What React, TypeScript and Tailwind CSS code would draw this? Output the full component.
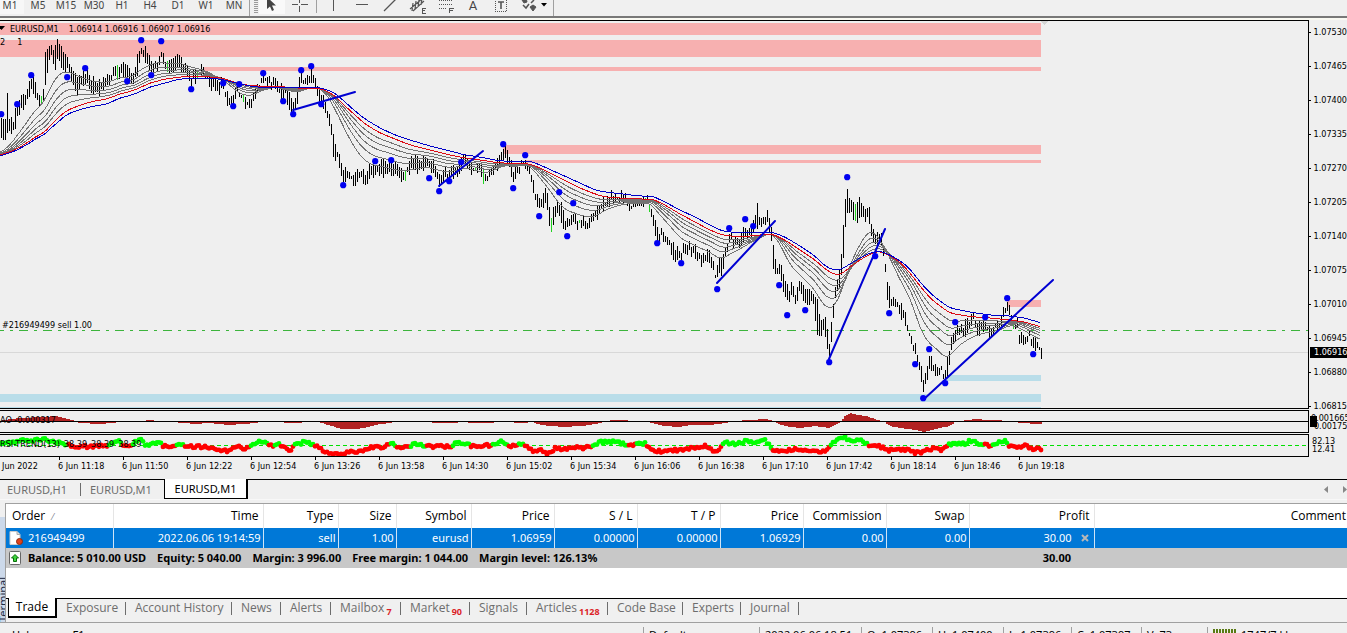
import type { ReactNode } from "react";

type Point = [number, number];
type Range = [number, number, number];

const RANGES: Range[] = [
  [1, 117, 136], [3, 121, 139], [5, 119, 136], [7, 92, 132], [9, 117, 130], [13, 121, 132], [16, 107, 122], [19, 102, 115],
  [22, 89, 108], [25, 94, 107], [28, 82, 97], [31, 77, 86], [35, 79, 97], [38, 95, 104], [41, 99, 107], [43, 88, 104],
  [45, 52, 88], [48, 51, 62], [51, 45, 58], [54, 51, 68], [57, 42, 63], [60, 46, 64], [63, 53, 67], [65, 57, 69], [68, 56, 72],
  [71, 68, 82], [74, 73, 85], [77, 79, 95], [80, 77, 87], [84, 68, 84], [87, 74, 84], [90, 77, 92], [94, 79, 92], [100, 81, 94],
  [105, 77, 86], [110, 76, 86], [114, 65, 75], [117, 66, 80], [121, 61, 74], [127, 65, 78], [131, 71, 84], [134, 72, 80],
  [137, 56, 72], [141, 44, 52], [145, 49, 62], [149, 59, 69], [153, 61, 71], [157, 59, 70], [161, 48, 60], [164, 57, 71],
  [168, 63, 73], [172, 61, 71], [178, 54, 67], [182, 61, 70], [187, 65, 78], [191, 75, 84], [196, 70, 79], [201, 68, 76],
  [205, 68, 78], [210, 76, 88], [214, 79, 91], [218, 84, 96], [222, 79, 89], [226, 92, 103], [230, 98, 105], [234, 93, 104],
  [237, 82, 91], [240, 93, 98], [243, 97, 103], [247, 101, 107], [251, 98, 108], [255, 86, 95], [258, 82, 92], [263, 77, 83],
  [267, 74, 84], [272, 79, 88], [276, 81, 90], [281, 85, 98], [285, 89, 97], [289, 94, 109], [292, 105, 112], [295, 95, 111],
  [299, 75, 92], [301, 74, 86], [304, 79, 88], [308, 75, 82], [312, 70, 82], [315, 80, 88], [319, 87, 99], [322, 96, 107],
  [326, 108, 117], [330, 118, 126], [333, 135, 154], [337, 150, 160], [340, 158, 169], [343, 171, 182], [346, 166, 179],
  [350, 172, 180], [354, 174, 185], [360, 169, 180], [366, 177, 185], [370, 163, 175], [378, 164, 176], [386, 161, 174],
  [395, 160, 174], [403, 174, 183], [409, 163, 172], [415, 154, 169], [418, 161, 175], [424, 159, 168], [430, 159, 171],
  [435, 166, 179], [440, 173, 184], [444, 169, 180], [448, 172, 180], [455, 166, 175], [460, 160, 171], [464, 155, 165],
  [470, 162, 171], [475, 166, 172], [480, 163, 170], [484, 171, 185], [488, 173, 181], [493, 166, 175], [498, 159, 168],
  [501, 149, 164], [505, 149, 161], [510, 158, 169], [513, 169, 186], [518, 164, 174], [523, 158, 164], [527, 162, 171],
  [532, 175, 185], [535, 193, 201], [539, 196, 212], [543, 194, 207], [545, 187, 204], [549, 206, 224], [551, 220, 229],
  [555, 202, 214], [558, 200, 211], [562, 206, 223], [566, 222, 230], [570, 214, 222], [574, 213, 224], [578, 219, 228],
  [582, 217, 225], [587, 219, 227], [592, 216, 224], [596, 210, 219], [599, 201, 212], [605, 200, 208], [611, 193, 202],
  [617, 194, 204], [623, 192, 202], [628, 200, 208], [632, 203, 210], [638, 200, 206], [643, 198, 204], [646, 194, 199],
  [650, 204, 212], [653, 215, 227], [657, 230, 241], [661, 231, 237], [666, 236, 243], [670, 239, 249], [674, 245, 262],
  [677, 249, 259], [681, 251, 261], [684, 244, 255], [690, 243, 253], [695, 244, 256], [700, 253, 264], [704, 253, 266],
  [708, 246, 259], [712, 256, 270], [715, 272, 282], [718, 262, 279], [723, 251, 268], [727, 241, 251], [731, 232, 240],
  [735, 239, 248], [740, 237, 247], [745, 225, 239], [750, 229, 239], [755, 216, 231], [757, 203, 226], [759, 217, 227],
  [762, 215, 224], [767, 213, 221], [770, 218, 233], [773, 242, 266], [776, 266, 275], [781, 265, 279], [784, 280, 294],
  [788, 290, 305], [791, 284, 297], [795, 292, 303], [800, 281, 290], [804, 290, 303], [808, 291, 302], [813, 293, 303],
  [817, 297, 337], [820, 325, 339], [824, 317, 329], [828, 332, 354], [829, 342, 359], [832, 312, 330], [834, 292, 306],
  [838, 274, 289], [842, 247, 273], [844, 207, 248], [846, 189, 209], [850, 199, 213], [853, 206, 222], [856, 208, 221],
  [858, 196, 219], [861, 200, 220], [865, 211, 221], [868, 203, 218], [871, 223, 234], [875, 231, 247], [879, 231, 240],
  [883, 242, 255], [885, 266, 275], [887, 282, 297], [890, 294, 308], [893, 296, 307], [898, 301, 311], [903, 308, 319],
  [908, 326, 334], [913, 343, 354], [917, 351, 361], [920, 361, 374], [923, 380, 395], [926, 374, 384], [928, 357, 369],
  [932, 361, 370], [936, 364, 374], [940, 366, 372], [944, 373, 379], [947, 357, 374], [950, 342, 357], [953, 331, 344],
  [957, 327, 337], [962, 326, 337], [967, 321, 336], [972, 316, 325], [974, 308, 319], [976, 325, 337], [980, 323, 332],
  [985, 319, 328], [990, 331, 339], [995, 323, 332], [1000, 319, 328], [1004, 306, 315], [1007, 301, 310], [1010, 311, 321],
  [1013, 322, 331], [1017, 321, 330], [1019, 335, 344], [1024, 336, 346], [1029, 331, 340], [1033, 341, 349], [1037, 340, 347],
  [1041, 352, 357],
];

const FAST: Point[] = [
  [0, 153], [10, 145], [25, 125], [35, 110], [43, 104], [50, 88], [57, 76], [65, 71], [72, 73], [80, 77], [95, 82], [110, 82],
  [120, 77], [132, 77], [140, 70], [150, 65], [160, 62], [170, 64], [180, 63], [190, 67], [200, 69], [208, 72], [215, 76],
  [222, 80], [230, 85], [237, 92], [247, 96], [253, 95], [260, 91], [275, 87], [290, 91], [300, 92], [308, 88], [318, 88],
  [325, 92], [330, 100], [338, 115], [345, 130], [353, 145], [362, 158], [372, 165], [385, 167], [395, 170], [405, 171],
  [415, 169], [425, 167], [435, 169], [445, 172], [455, 171], [465, 168], [475, 170], [485, 173], [495, 170], [505, 165],
  [515, 167], [525, 164], [532, 168], [540, 178], [548, 188], [553, 195], [560, 205], [568, 211], [575, 213], [582, 216],
  [590, 217], [598, 215], [605, 210], [620, 205], [635, 203], [650, 203], [660, 215], [670, 226], [680, 238], [690, 243],
  [700, 248], [710, 252], [716, 257], [722, 259], [730, 254], [740, 249], [750, 243], [760, 238], [768, 233], [775, 236],
  [783, 250], [790, 265], [800, 275], [808, 283], [815, 290], [820, 300], [828, 309], [835, 306], [842, 290], [850, 265],
  [858, 248], [866, 234], [872, 231], [880, 239], [890, 258], [900, 280], [907, 292], [913, 306], [918, 322], [923, 335],
  [930, 344], [938, 350], [945, 358], [950, 356], [957, 347], [970, 338], [980, 334], [990, 332], [1000, 330], [1010, 325],
  [1020, 328], [1030, 334], [1041, 340],
];

const RED: Point[] = [
  [0, 155], [15, 150], [30, 141], [38, 135], [43, 134], [50, 126], [58, 118], [66, 111], [75, 107], [90, 102], [107, 99],
  [120, 94], [135, 90], [150, 83], [165, 79], [180, 77], [195, 76], [210, 77], [222, 78], [240, 84], [255, 86], [275, 86],
  [295, 88], [315, 88], [325, 90], [335, 96], [345, 106], [355, 115], [365, 124], [380, 133], [395, 139], [410, 145],
  [430, 150], [450, 155], [465, 158], [480, 160], [500, 163], [515, 163], [530, 164], [540, 168], [560, 178], [580, 188],
  [595, 194], [605, 197], [620, 198], [640, 199], [652, 199], [665, 205], [680, 214], [695, 222], [710, 230], [722, 235],
  [740, 237], [760, 235], [772, 234], [785, 240], [800, 250], [815, 260], [825, 269], [835, 275], [842, 274], [850, 267],
  [860, 260], [870, 254], [880, 251], [890, 256], [900, 262], [910, 273], [920, 286], [930, 298], [940, 306], [950, 313],
  [960, 315], [975, 317], [990, 318], [1010, 320], [1025, 322], [1041, 327],
];

const BLUE: Point[] = [
  [0, 156], [15, 151], [30, 143], [38, 137], [43, 136], [50, 129], [66, 115], [75, 111], [90, 107], [107, 104], [120, 98],
  [135, 94], [150, 87], [165, 83], [180, 79], [200, 78], [220, 79], [240, 84], [255, 87], [275, 87], [295, 88], [315, 87],
  [325, 89], [335, 93], [345, 102], [355, 111], [365, 119], [380, 128], [395, 135], [410, 140], [430, 146], [450, 151],
  [465, 155], [480, 157], [500, 161], [530, 161], [540, 165], [560, 174], [580, 183], [595, 190], [605, 192], [640, 196],
  [652, 196], [665, 202], [680, 210], [695, 217], [710, 225], [722, 231], [740, 233], [772, 232], [785, 237], [800, 246],
  [815, 256], [825, 266], [833, 270], [840, 270], [850, 264], [860, 258], [870, 253], [880, 251], [890, 255], [902, 262],
  [910, 269], [920, 282], [930, 293], [940, 301], [950, 308], [960, 310], [975, 313], [990, 315], [1010, 316], [1025, 318],
  [1041, 323],
];

const FRACTALS: Point[] = [
  [1, 114], [17, 104], [31, 75], [67, 77], [85, 68], [127, 81], [141, 40], [151, 75], [161, 41], [191, 89], [223, 83],
  [233, 106], [239, 84], [263, 73], [283, 101], [293, 114], [301, 70], [311, 66], [321, 104], [343, 185], [375, 161],
  [391, 160], [429, 178], [439, 191], [449, 181], [461, 162], [503, 144], [513, 188], [525, 155], [539, 216], [559, 192],
  [567, 236], [573, 203], [657, 243], [681, 263], [717, 289], [729, 228], [745, 219], [753, 226], [779, 285], [787, 315],
  [805, 310], [829, 362], [847, 177], [875, 256], [889, 313], [915, 364], [923, 398], [929, 349], [945, 383], [955, 322],
  [985, 317], [1007, 298], [1033, 354],
];

const TRENDS = [
  [293, 110, 355, 92], [439, 186, 483, 151], [717, 283, 775, 221], [829, 359, 885, 229], [923, 400, 1053, 280],
];

const ZONES: [number, number, number, number, string][] = [
  [0, 23, 1041, 12, "#f7b0b0"], [0, 40, 1041, 17, "#f7b0b0"], [204, 67, 837, 4, "#f7b0b0"], [503, 145, 538, 9, "#f7b0b0"],
  [525, 160, 516, 3, "#f7b0b0"], [1007, 300, 34, 7, "#f7b0b0"], [0, 394, 1041, 8, "#b9dde9"], [947, 375, 94, 6, "#b9dde9"],
  [0, 407, 1041, 1, "#b9dde9"],
];

const GREEN_BARS = new Set([41, 117, 167, 197, 243, 405, 475, 483, 551, 579, 645, 649, 855, 1013]);

const AO: Point[] = [
  [0, 420], [10, 418], [20, 417], [45, 416], [55, 415], [65, 417], [76, 420], [78, 421], [80, 422], [100, 423], [112, 422],
  [118, 421], [120, 420], [130, 420], [132, 421], [138, 421], [140, 420], [150, 419], [160, 420], [168, 420], [170, 421],
  [187, 422], [195, 423], [210, 422], [228, 424], [245, 423], [262, 421], [266, 420], [278, 420], [280, 421], [290, 422],
  [300, 422], [304, 420], [315, 420], [318, 421], [325, 423], [335, 426], [343, 428], [355, 428], [365, 427], [375, 424],
  [390, 422], [395, 421], [414, 421], [416, 420], [424, 420], [426, 421], [438, 422], [455, 422], [460, 421], [478, 422],
  [493, 422], [500, 420], [510, 420], [515, 422], [522, 422], [532, 421], [538, 423], [550, 425], [565, 426], [580, 425],
  [590, 424], [600, 422], [605, 420], [615, 419], [640, 420], [643, 421], [645, 420], [648, 421], [655, 423], [665, 425],
  [678, 426], [690, 424], [710, 424], [725, 422], [735, 420], [750, 419], [766, 418], [773, 420], [776, 422], [785, 425],
  [800, 427], [815, 425], [830, 427], [837, 423], [841, 420], [845, 415], [850, 412], [858, 414], [866, 415], [875, 418],
  [885, 421], [890, 425], [900, 427], [915, 429], [925, 431], [935, 428], [950, 425], [955, 421], [960, 420], [975, 418],
  [990, 419], [1015, 420], [1020, 422], [1041, 423],
];

const RSI: Point[] = [
  [0, 443], [10, 442], [20, 440], [30, 441], [45, 438], [50, 441], [60, 441], [68, 445], [75, 446], [95, 446], [107, 445],
  [110, 444], [118, 440], [122, 445], [132, 446], [135, 441], [140, 439], [145, 444], [160, 443], [163, 446], [175, 445],
  [180, 443], [185, 446], [200, 446], [215, 448], [228, 451], [235, 446], [245, 448], [250, 446], [255, 443], [262, 441],
  [268, 444], [272, 446], [276, 443], [283, 446], [290, 450], [294, 445], [298, 444], [305, 441], [310, 443], [315, 445],
  [322, 449], [330, 453], [340, 454], [350, 452], [360, 451], [364, 449], [370, 447], [385, 446], [392, 443], [396, 447],
  [408, 446], [415, 443], [425, 445], [435, 446], [450, 446], [455, 443], [468, 443], [471, 446], [490, 445], [494, 444],
  [500, 441], [507, 443], [509, 446], [517, 445], [521, 444], [527, 446], [533, 451], [540, 450], [548, 453], [555, 448],
  [565, 449], [575, 447], [585, 448], [592, 445], [600, 442], [612, 441], [626, 444], [630, 446], [636, 444], [645, 443],
  [650, 449], [660, 451], [675, 450], [690, 448], [700, 448], [705, 446], [715, 452], [721, 447], [725, 442], [735, 444],
  [745, 441], [755, 442], [765, 440], [770, 445], [772, 451], [785, 450], [795, 449], [805, 449], [815, 451], [820, 451],
  [828, 449], [832, 443], [840, 438], [845, 436], [848, 440], [858, 439], [866, 443], [872, 446], [880, 446], [890, 450],
  [905, 449], [915, 452], [920, 453], [925, 449], [935, 448], [942, 450], [948, 445], [955, 443], [965, 443], [970, 440],
  [978, 443], [986, 445], [992, 445], [1000, 442], [1004, 440], [1009, 445], [1020, 446], [1025, 445], [1030, 448], [1041, 448],
];

const GREEN_RUNS: Point[] = [
  [0, 68], [109, 121], [133, 161], [176, 184], [250, 268], [274, 279], [295, 313], [391, 395], [410, 425], [453, 469],
  [492, 507], [518, 524], [592, 627], [636, 646], [722, 771], [830, 868], [948, 984], [992, 1008],
];

const BAR_XS = Array.from({ length: 521 }, (_, i) => 1 + i * 2);

function noise(n: number) {
  const v = Math.sin(n * 127.1) * 43758.5453;
  return v - Math.floor(v);
}

function at(points: Point[], x: number) {
  if (x <= points[0][0]) return points[0][1];
  for (let i = 1; i < points.length; i++) {
    const [x1, y1] = points[i];
    if (x <= x1) {
      const [x0, y0] = points[i - 1];
      return y0 + ((y1 - y0) * (x - x0)) / (x1 - x0);
    }
  }
  return points[points.length - 1][1];
}

function smooth(points: Point[], x: number) {
  return (at(points, x - 4) + at(points, x - 2) + at(points, x) + at(points, x + 2) + at(points, x + 4)) / 5;
}

function averagePath(fn: (x: number) => number) {
  const out: string[] = [];
  for (let x = 0; x <= 1041; x += 2) out.push(`${x} ${fn(x).toFixed(1)}`);
  return "M" + out.join("L");
}

const HIGHS: Point[] = RANGES.map(([x, h]) => [x, h]);
const LOWS: Point[] = RANGES.map(([x, , l]) => [x, l]);

function barPath(green: boolean) {
  return BAR_XS.filter((x) => GREEN_BARS.has(x) === green)
    .map((x) => {
      const hi = Math.round(at(HIGHS, x) - noise(x) * 8 + 4);
      const lo = Math.round(at(LOWS, x) + noise(x + 0.5) * 8 - 4);
      return `M${x + 0.5} ${hi}V${Math.max(lo, hi + 3)}`;
    })
    .join("");
}

const aoPath =
  "M0 421.5" + BAR_XS.map((x) => `L${x - 1} ${Math.round(at(AO, x)) + 0.5}h2`).join("") + "L1042 421.5Z";

const isUp = (x: number) => GREEN_RUNS.some(([a, b]) => x >= a && x <= b);

function PricePlot() {
  return (
    <svg className="block h-full w-full" shapeRendering="crispEdges" fill="none" aria-label="EURUSD price chart">
      <g transform="translate(0,-21)">
        {ZONES.map(([x, y, w, h, c], i) => (
          <rect key={i} x={x} y={y} width={w} height={h} fill={c} />
        ))}
        <path d="M1040 21h8l-4 4z" fill="#d4d4d4" />
        <line x1="0" x2="100%" y1="352.5" y2="352.5" stroke="#d8d8d8" />
        <line x1="-5" x2="100%" y1="330.5" y2="330.5" stroke="#3cb43c" strokeDasharray="9 6 3 6" />
        <path d={barPath(false)} stroke="#000" />
        <path d={barPath(true)} stroke="#22d322" />
        {[0, 0.26, 0.47, 0.65, 0.82].map((w) => (
          <path
            key={w}
            d={averagePath((x) => smooth(FAST, x - w * 5) * (1 - w) + smooth(RED, x) * w)}
            stroke="#737373"
          />
        ))}
        <path d={averagePath((x) => smooth(RED, x))} stroke="#dc0a14" />
        <path d={averagePath((x) => smooth(BLUE, x))} stroke="#0000c8" />
        <g shapeRendering="auto">
          {TRENDS.map(([x1, y1, x2, y2]) => (
            <line key={x1} x1={x1} y1={y1} x2={x2} y2={y2} stroke="#0000d2" strokeWidth="2" strokeLinecap="round" />
          ))}
          {FRACTALS.map(([x, y]) => (
            <circle key={x} cx={x + 0.2} cy={y + 0.2} r="3.1" fill="#0000f0" />
          ))}
        </g>
      </g>
    </svg>
  );
}

function AoPlot() {
  return (
    <svg className="block h-full w-full" shapeRendering="crispEdges" aria-label="Awesome oscillator">
      <g transform="translate(0,-411)">
        <path d={aoPath} fill="#b22222" />
        <line x1="0" x2="100%" y1="421.5" y2="421.5" stroke="#000" />
      </g>
    </svg>
  );
}

function RsiPlot() {
  return (
    <svg className="block h-full w-full" aria-label="RSI trend">
      <g transform="translate(0,-435)">
        <line x1="0" x2="100%" y1="445.5" y2="445.5" stroke="#00e000" strokeDasharray="4 3" />
        {BAR_XS.map((x) => (
          <circle key={x} cx={x} cy={at(RSI, x) + noise(x) * 3 - 1} r="2.4" fill={isUp(x) ? "#00ff00" : "#ff0000"} />
        ))}
      </g>
    </svg>
  );
}

const CHART_FONT = "font-['DejaVu_Sans_Condensed','Noto_Sans',sans-serif] text-[9px] leading-[12px]";

function ToolButton({ label, children, wide }: { label: string; children: ReactNode; wide?: boolean }) {
  return (
    <button type="button" aria-label={label} className={wide ? "h-4 w-9 shrink-0" : "h-4 w-7 shrink-0"}>
      <svg className="h-4 w-full" fill="none" stroke="#555" shapeRendering="auto">
        {children}
      </svg>
    </button>
  );
}

function Toolbar() {
  const frames = ["M5", "M15", "M30", "H1", "H4", "D1", "W1", "MN"];
  return (
    <div className="flex h-4 shrink-0 items-start overflow-hidden bg-[#f0f0f0] text-[10px] leading-[10px] text-[#444]">
      <button type="button" className="h-[14px] w-6 bg-[#f7f7f7] pb-1 pr-1">M1</button>
      {frames.map((f) => (
        <button key={f} type="button" className="w-7 text-center">{f}</button>
      ))}
      <div className="ml-px h-4 w-px bg-[#a0a0a0]" />
      <svg className="ml-1 h-[14px] w-1" stroke="#9a9a9a" strokeWidth="4" strokeDasharray="1 1">
        <line x1="2" x2="2" y1="0" y2="13" />
      </svg>
      <button type="button" aria-label="Cursor" className="ml-px h-[14px] w-[26px] bg-[#f9f9f9]">
        <svg className="h-[14px] w-[26px]" fill="#444">
          <path d="M8 -3v12l3-2.500 2 4.500 2-1-2-4.500h4z" />
        </svg>
      </button>
      <ToolButton label="Crosshair">
        <path d="M14.500 0v3M14.500 6v6M7 4.500h6M16 4.500h7" shapeRendering="crispEdges" />
      </ToolButton>
      <div className="ml-[3px] h-[13px] w-px bg-[#a0a0a0]" />
      <ToolButton label="Vertical line"><path d="M16.500 0v11" shapeRendering="crispEdges" /></ToolButton>
      <ToolButton label="Horizontal line"><path d="M11 4.500h12" shapeRendering="crispEdges" /></ToolButton>
      <ToolButton label="Trendline"><path d="M11 11L23 -1" strokeWidth="1.300" /></ToolButton>
      <ToolButton label="Equidistant channel">
        <path d="M9 9L22 -2M12 11L23 1M12 3l-1 8M15 1l-1 8M18 0l-1 7M21 -2l-1 7" strokeWidth="1.200" />
        <path d="M24.500 8h-3.500v5h3.500M21 10.500h3" shapeRendering="crispEdges" />
      </ToolButton>
      <ToolButton label="Fibonacci retracement">
        <path d="M10 0.500h14M10 4.500h14M10 8.500h8" strokeDasharray="1 1" shapeRendering="crispEdges" />
        <path d="M24.500 8h-4v5M20.500 10.500h3" shapeRendering="crispEdges" />
      </ToolButton>
      <button type="button" className="w-7 pl-1 text-center font-['Roboto'] text-[13px] leading-[11px]">A</button>
      <ToolButton label="Text label">
        <path d="M10.500 -1v12.500h11V-1" strokeDasharray="1 1" shapeRendering="crispEdges" />
        <path d="M13 2h6M16 2v7" strokeWidth="1.600" />
      </ToolButton>
      <ToolButton label="Arrows" wide>
        <path d="M9 0l4 -2 1 4-3 1zM17 7l3-2 3 2-3 4z" fill="#555" />
        <path d="M10 5l3 3 3-4M18 3l3-3" strokeWidth="1.500" />
        <path d="M28 3h6l-3 3.500z" fill="#000" stroke="none" />
      </ToolButton>
      <div className="ml-1 h-4 w-px bg-[#a0a0a0]" />
    </div>
  );
}

const PRICES = [
  "1.07530", "1.07465", "1.07400", "1.07335", "1.07270", "1.07205", "1.07140", "1.07075", "1.07010", "1.06945", "1.06880", "1.06815",
];
const TIMES = [
  "11:18", "11:50", "12:22", "12:54", "13:26", "13:58", "14:30", "15:02", "15:34", "16:06", "16:38", "17:10", "17:42", "18:14", "18:46", "19:18",
];

function Chart() {
  return (
    <section className={`bg-[#efefef] text-black ${CHART_FONT}`}>
      <div className="flex">
        <div className="flex min-w-0 flex-1 flex-col gap-px">
          <div className="relative h-[389px] border-y border-r border-black">
            <PricePlot />
            <svg className="absolute left-0 top-[5px] h-1 w-[5px]"><path d="M-2 0h7l-3.500 4z" /></svg>
            <div className="absolute left-[10px] top-[2px] flex gap-[10px] whitespace-pre">
              <span>EURUSD,M1</span>
              <span>1.06914 1.06916 1.06907 1.06916</span>
            </div>
            <div className="absolute left-0 top-[15px] flex gap-3"><span>2</span><span>1</span></div>
            <div className="absolute left-[2px] top-[298px]">#216949499 sell 1.00</div>
          </div>
          <div className="relative h-[23px] border-y border-r border-black">
            <AoPlot />
            <div className="absolute left-0 top-[3px]">AO -0.000317</div>
          </div>
          <div className="relative h-[23px] border-y border-r border-black">
            <RsiPlot />
            <div className="absolute left-0 top-[3px] flex gap-1 whitespace-nowrap">
              <span>RSI-TREND(13)</span>
              <span>38.39</span>
              <span>38.39</span>
              <span>38.39</span>
            </div>
          </div>
        </div>
        <div className="relative w-[38px] shrink-0 overflow-hidden pt-[6px]">
          <div className="flex h-[386px] flex-col justify-between">
            {PRICES.map((p) => (
              <div key={p} className="flex items-center gap-[3px]">
                <span className="h-px w-[2px] bg-black" />
                {p}
              </div>
            ))}
          </div>
          <div className="absolute left-px top-[327px] h-[11px] w-full bg-black pl-1 leading-[11px] text-white">1.06916</div>
          <div className="absolute left-px top-[396px] h-[11px] w-[7px] bg-black" />
          <div className="absolute left-[2px] top-[392px]">0.001665</div>
          <div className="absolute left-[2px] top-[400px]">-0.00175</div>
          <div className="absolute left-[3px] top-[415px]">82.13</div>
          <div className="absolute left-[3px] top-[423px]">12.41</div>
        </div>
      </div>
      <div className="flex h-[22px] overflow-hidden whitespace-nowrap">
        <div className="w-[58px] shrink-0 pl-[2px] pt-[3px]">Jun 2022</div>
        {TIMES.map((t) => (
          <div key={t} className="w-16 shrink-0">
            <div className="ml-px h-[3px] w-px bg-black" />
            6 Jun {t}
          </div>
        ))}
      </div>
    </section>
  );
}

function ChartTabs() {
  return (
    <nav className="flex h-5 shrink-0 bg-[#f0f0f0] text-[11px] leading-[18px] text-[#6d6d6d]">
      <div className="flex w-[164px] border-t border-black">
        <button type="button" className="my-[3px] w-[81px] border-r border-[#6d6d6d] pl-[7px] text-left leading-[12px]">EURUSD,H1</button>
        <button type="button" className="my-[3px] pl-[9px] leading-[12px]">EURUSD,M1</button>
      </div>
      <button type="button" className="w-[84px] border-x border-b border-r-2 border-black bg-white text-black">EURUSD,M1</button>
      <div className="flex flex-1 items-center justify-end gap-[14px] border-t border-black">
        <svg className="h-[7px] w-1" fill="#888"><path d="M4 0v7L0 3.500z" /></svg>
        <svg className="h-[7px] w-[5px]" fill="#888"><path d="M1 0v7l4-3.500z" /></svg>
      </div>
    </nav>
  );
}

const COLUMNS = ["Order", "Time", "Type", "Size", "Symbol", "Price", "S / L", "T / P", "Price", "Commission", "Swap", "Profit", "Comment"];
const ROW = ["2022.06.06 19:14:59", "sell", "1.00", "eurusd", "1.06959", "0.00000", "0.00000", "1.06929", "0.00", "0.00"];

function Orders() {
  return (
    <table className="w-full table-fixed border-collapse text-[11px] leading-[18px]">
      <colgroup>
        <col className="w-[107px]" />
        <col className="w-[150px]" />
        <col className="w-[75px]" />
        <col className="w-[58px]" />
        <col className="w-[75px]" />
        <col className="w-[83px]" />
        <col className="w-[83px]" />
        <col className="w-[83px]" />
        <col className="w-[83px]" />
        <col className="w-[83px]" />
        <col className="w-[83px]" />
        <col className="w-[125px]" />
        <col />
      </colgroup>
      <thead className="font-['Open_Sans','Noto_Sans',sans-serif] text-[12px]">
        <tr className="h-6">
          {COLUMNS.map((c, i) =>
            i === 0 ? (
              <th key={i} scope="col" className="border-r border-[#e5e5e5] p-0 pl-[6px] text-left font-normal">
                {c} <span className="pl-1 text-[9px] text-gray-500">⁄</span>
              </th>
            ) : (
              <th
                key={i}
                scope="col"
                className={i === 12 ? "p-0 pr-px text-right font-normal" : "border-r border-[#e5e5e5] p-0 pr-1 text-right font-normal"}
              >
                {c}
              </th>
            ),
          )}
        </tr>
      </thead>
      <tbody>
        <tr className="h-5 bg-[#0078d7] text-white">
          <td className="border-r border-[#cfe4f7] p-0">
            <div className="flex items-center gap-[5px] pl-[3px]">
              <svg className="h-[14px] w-[14px]">
                <path d="M1 .5h7l3 3v10H1z" fill="#fff" stroke="#ccc" />
                <path d="M8 .5v3h3" fill="#ddd" stroke="#aaa" />
                <circle cx="10.500" cy="10.500" r="3" fill="#e0421c" stroke="#8c2a10" />
              </svg>
              <span>216949499</span>
            </div>
          </td>
          {ROW.map((v, i) => (
            <td key={i} className="border-r border-[#cfe4f7] p-0 pr-[2px] text-right">{v}</td>
          ))}
          <td className="border-r border-[#cfe4f7] p-0">
            <div className="flex items-center justify-end gap-[9px] pr-[5px]">
              30.00
              <button type="button" aria-label="Close order">
                <svg className="block h-2 w-2" stroke="#b8b8b8" strokeWidth="2"><path d="M1 1l6 6M7 1L1 7" /></svg>
              </button>
            </div>
          </td>
          <td className="p-0" />
        </tr>
        <tr className="h-5 bg-[#c8c8c8] font-bold">
          <td colSpan={11} className="p-0">
            <div className="flex items-center whitespace-nowrap pl-[3px]">
              <svg className="mr-[6px] h-[14px] w-[13px]">
                <rect x=".5" y=".5" width="11" height="13" rx="1" fill="#fff" stroke="#666" />
                <path d="M6 3.500l3.500 3.500h-2v3.500h-3V7h-2z" fill="#3fd43f" stroke="#087008" />
              </svg>
              <div className="flex gap-[11px]">
                <span>Balance: 5 010.00 USD</span>
                <span>Equity: 5 040.00</span>
                <span>Margin: 3 996.00</span>
                <span>Free margin: 1 044.00</span>
                <span>Margin level: 126.13%</span>
              </div>
            </div>
          </td>
          <td className="p-0 pr-[23px] text-right">30.00</td>
          <td className="p-0" />
        </tr>
      </tbody>
    </table>
  );
}

const TERMINAL_TABS: { name: string; width: string; count?: string }[] = [
  { name: "Exposure", width: "w-[69px]" },
  { name: "Account History", width: "w-[106px]" },
  { name: "News", width: "w-[49px]" },
  { name: "Alerts", width: "w-[50px]" },
  { name: "Mailbox", width: "w-[70px]", count: "7" },
  { name: "Market", width: "w-[69px]", count: "90" },
  { name: "Signals", width: "w-[57px]" },
  { name: "Articles", width: "w-[81px]", count: "1128" },
  { name: "Code Base", width: "w-[75px]" },
  { name: "Experts", width: "w-[58px]" },
  { name: "Journal", width: "w-[58px]" },
];

function Terminal() {
  return (
    <section className="flex shrink-0 border-t border-[#f8f8f8] bg-[#f0f0f0] pt-[3px]">
      <div className="mt-[14px] flex w-[5px] shrink-0 justify-center overflow-hidden bg-[#ccd9ea] pt-14 text-[11px] leading-[12px] text-[#1c2b45]">
        <span className="rotate-180 [writing-mode:vertical-rl]">Terminal</span>
      </div>
      <div className="min-w-0 flex-1 border-l border-t border-[#a0a0a0]">
        <div className="h-[94px] bg-white">
          <Orders />
        </div>
        <nav className="flex h-[24px] items-start font-['Open_Sans','Noto_Sans',sans-serif] text-[12px] leading-[12px] text-[#6d6d6d]">
          <div className="h-px w-[2px] bg-black" />
          <button type="button" className="h-5 w-[49px] border-b-2 border-l border-r-2 border-black bg-white text-black">Trade</button>
          <div className="flex flex-1 border-t border-black pt-[3px]">
            {TERMINAL_TABS.map((t) => (
              <button
                key={t.name}
                type="button"
                className={`${t.width} flex h-[13px] shrink-0 gap-[2px] whitespace-nowrap border-r border-[#6d6d6d] pl-[9px] text-left`}
              >
                {t.name}
                {t.count && <span className="pt-1 text-[9px] font-bold text-[#dc1e28]">{t.count}</span>}
              </button>
            ))}
          </div>
        </nav>
      </div>
    </section>
  );
}

const STATUS = [
  { text: "Default", width: "w-[116px]" },
  { text: "2022.06.06 18:51", width: "w-[102px]" },
  { text: "O: 1.07396", width: "w-[71px]" },
  { text: "H: 1.07400", width: "w-[71px]" },
  { text: "L: 1.07396", width: "w-[68px]" },
  { text: "C: 1.07397", width: "w-[70px]" },
  { text: "V: 73", width: "w-[66px]" },
];

function StatusBar() {
  return (
    <footer className="flex h-6 shrink-0 border-t border-[#a0a0a0] bg-[#f0f0f0] pt-1 text-[11px] leading-[16px] text-black">
      <div className="w-[643px] shrink-0 pl-3">Help, press F1</div>
      {STATUS.map((s) => (
        <div key={s.text} className={`${s.width} shrink-0 whitespace-nowrap border-l border-[#a0a0a0] pl-[5px]`}>{s.text}</div>
      ))}
      <div className="flex flex-1 gap-1 whitespace-nowrap border-l border-[#a0a0a0] pl-[5px]">
        <svg className="mt-[2px] h-3 w-6" stroke="#5a7a14" strokeWidth="12" strokeDasharray="2 1">
          <line x1="0" x2="24" y1="6" y2="6" />
        </svg>
        1747/7 kb
      </div>
    </footer>
  );
}

export default function App() {
  return (
    <main className="flex h-screen flex-col overflow-hidden bg-[#f0f0f0] font-['Noto_Sans','Open_Sans',sans-serif]">
      <Toolbar />
      <div className="h-1 shrink-0 border-b-2 border-t-2 border-b-[#f9f9f2] border-t-[#787878]" />
      <Chart />
      <ChartTabs />
      <Terminal />
      <StatusBar />
    </main>
  );
}
